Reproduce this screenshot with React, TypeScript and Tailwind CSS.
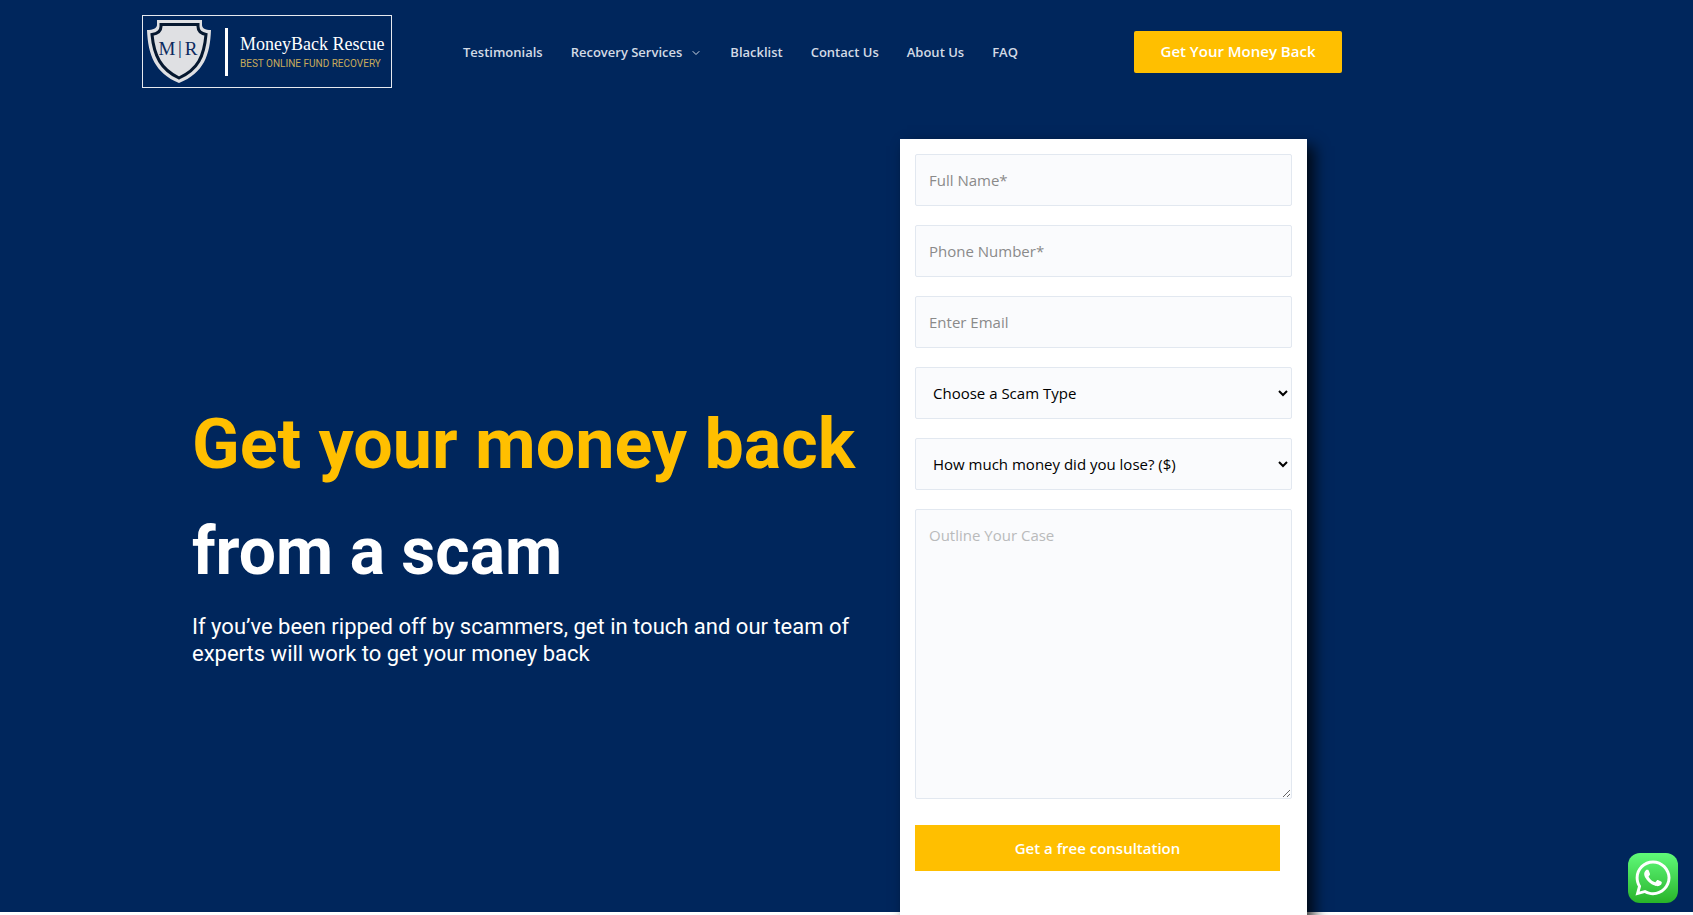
import React from 'react';
import { ChevronDown } from 'lucide-react';
import { FaWhatsapp } from 'react-icons/fa';

const navLinks = [
  { label: 'Testimonials' },
  { label: 'Recovery Services', hasMenu: true },
  { label: 'Blacklist' },
  { label: 'Contact Us' },
  { label: 'About Us' },
  { label: 'FAQ' },
];

const textFields = [
  { id: 'full-name', type: 'text', label: 'Full Name*' },
  { id: 'phone', type: 'tel', label: 'Phone Number*' },
  { id: 'email', type: 'email', label: 'Enter Email' },
];

const selectFields = [
  { id: 'scam-type', label: 'Choose a Scam Type' },
  { id: 'amount-lost', label: 'How much money did you lose? ($)' },
];

const fieldStyle = 'block w-full rounded-xs border border-[#e2e8f0] bg-[#fafbfd]';

const Logo: React.FC = () => (
  <a href="#" className="flex h-[73px] w-[250px] shrink-0 items-center border border-white/90 pl-1">
    <svg viewBox="0 0 64 65" className="h-[65px] w-16 shrink-0" aria-hidden="true">
      <path
        d="M10 1h45v5c0 3 3 5 9 5-1 25-7 43-32 53C8 54 1 36 0 11c6 0 10-2 10-5z"
        fill="#dfe0e3"
      />
      <path
        d="M14 5.500h37v2c0 4 3 7 8 8-2 22-8 35-27 43.500C14 50.500 7 37 5 15.500c6-1 9-4 9-8z"
        fill="#dfe0e3"
        stroke="#06182f"
        strokeWidth="3"
      />
      <g fontSize="19" fontFamily="Liberation Serif, serif" fill="#0c2a5e" textAnchor="middle">
        <text x="20" y="36">M</text>
        <text x="33" y="35">|</text>
        <text x="44" y="36">R</text>
      </g>
    </svg>
    <span className="ml-[14px] h-12 w-[3px] shrink-0 bg-white" />
    <span className="ml-3 flex flex-col whitespace-nowrap">
      <span className="font-['Liberation_Serif',serif] text-[18px] leading-6 text-white">MoneyBack Rescue</span>
      <span className="font-['Roboto',sans-serif] text-[10px] leading-4 text-[#c9ab5b]">
        BEST ONLINE FUND RECOVERY
      </span>
    </span>
  </a>
);

const Header: React.FC = () => (
  <header className="ml-[142px] flex max-w-[1200px] items-center pt-[15px]">
    <Logo />
    <nav className="ml-[71px] flex items-center gap-7 pt-[2px] whitespace-nowrap text-[13px] font-semibold text-[#d3dae5]">
      {navLinks.map((link) => (
        <a key={link.label} href="#" className="flex items-center gap-2">
          {link.label}
          {link.hasMenu && <ChevronDown className="h-3 w-3" strokeWidth={2} />}
        </a>
      ))}
    </nav>
    <button className="ml-auto h-[42px] w-52 shrink-0 rounded-xs bg-[#ffbf00] text-[15px] font-semibold text-white">
      Get Your Money Back
    </button>
  </header>
);

const ConsultationForm: React.FC = () => (
  <form className="-mb-2 flex h-fit w-[407px] shrink-0 flex-col gap-[19px] bg-white px-[15px] pt-[15px] pb-[49px] text-[15px] shadow-[7px_7px_14px_0_rgba(0,0,0,0.8)]">
    {textFields.map((field) => (
      <input
        key={field.id}
        id={field.id}
        type={field.type}
        aria-label={field.label}
        placeholder={field.label}
        className={`${fieldStyle} h-[52px] px-[13px] placeholder:text-[#8a8a8a]`}
      />
    ))}
    {selectFields.map((field) => (
      <select key={field.id} id={field.id} aria-label={field.label} className={`${fieldStyle} h-[52px] px-[13px] text-black`}>
        <option>{field.label}</option>
      </select>
    ))}
    <textarea
      id="case"
      aria-label="Outline Your Case"
      placeholder="Outline Your Case"
      className={`${fieldStyle} h-[290px] resize px-[13px] py-[14px] placeholder:text-[#b9babb]`}
    />
    <button type="button" className="mt-[7px] h-[46px] w-[365px] bg-[#ffbf00] font-semibold text-white">
      Get a free consultation
    </button>
  </form>
);

const App: React.FC = () => {
  return (
    <div className="min-h-screen overflow-hidden bg-white font-['Open_Sans',sans-serif]">
      <div className="bg-[#00265c]">
        <Header />
        <main className="flex pt-[51px] pl-[192px]">
          <div className="w-[708px] shrink-0 pt-[252px] font-['Roboto',sans-serif] text-white">
            <h1 className="text-[70px] leading-[107px] font-bold">
              <span className="block text-[#ffbf00]">Get your money back</span>
              <span className="block text-[66px]">from a scam</span>
            </h1>
            <p className="mt-2 max-w-[670px] text-[22px] leading-[27px]">
              If you’ve been ripped off by scammers, get in touch and our team of experts will work to get your money back
            </p>
          </div>
          <ConsultationForm />
        </main>
      </div>
      <a
        href="#"
        aria-label="Chat on WhatsApp"
        className="fixed right-[15px] bottom-3 flex h-[50px] w-[50px] items-center justify-center rounded-xl bg-linear-to-b from-[#5ffa78] to-[#28b427] text-white"
      >
        <FaWhatsapp className="h-10 w-10" />
      </a>
    </div>
  );
};

export default App;
